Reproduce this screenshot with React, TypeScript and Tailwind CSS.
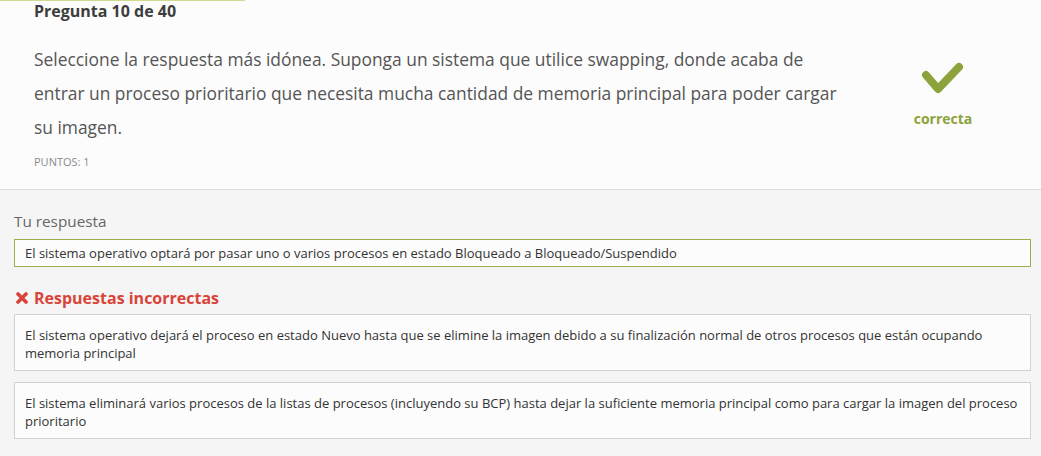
import React from 'react';

const wrong = [
  'El sistema operativo dejará el proceso en estado Nuevo hasta que se elimine la imagen debido a su finalización normal de otros procesos que están ocupando memoria principal',
  'El sistema eliminará varios procesos de la listas de procesos (incluyendo su BCP) hasta dejar la suficiente memoria principal como para cargar la imagen del proceso prioritario',
];

export default function App() {
  return (
    <div className="w-[1041px] h-[456px] overflow-hidden bg-[#f5f5f5] font-['Open_Sans',sans-serif]">
      {/* Question header */}
      <div className="relative bg-[#fcfcfc] border-b border-[#dcdcdc] h-[190px] flex">
        <div className="absolute left-0 top-0 w-[245px] h-px bg-[#cfdc8c]" />
        <div className="flex-1 pl-[34px] pt-0">
          <h2 className="text-[16px] font-bold text-[#3d3d3d] leading-[22px]">Pregunta 10 de 40</h2>
          <p className="mt-[20px] text-[17.4px] leading-[34px] text-[#555] w-[805px]">
            Seleccione la respuesta más idónea. Suponga un sistema que utilice swapping, donde acaba de entrar un proceso prioritario que necesita mucha cantidad de memoria principal para poder cargar su imagen.
          </p>
          <p className="mt-[10px] text-[11px] uppercase text-[#8a8a8a]">Puntos: 1</p>
        </div>
        <div className="w-[200px] flex flex-col items-center pt-[61px] pl-[4px]">
          <svg width="44" height="36" viewBox="0 0 44 36">
            <polyline points="5,14 17,28 38,6" fill="none" stroke="#8ca33b" strokeWidth="8" strokeLinecap="round" strokeLinejoin="round" />
          </svg>
          <span className="mt-[11px] text-[14px] font-bold text-[#8ca33b]">correcta</span>
        </div>
      </div>

      {/* Answers */}
      <div className="pl-[14px] pr-[10px] pt-[20px]">
        <p className="text-[15.3px] text-[#666] leading-[22px]">Tu respuesta</p>
        <div className="mt-[7px] border border-[#9aae4c] bg-[#fcfcfc] px-[10px] py-[4px] text-[13px] leading-[18px] text-[#333]">
          El sistema operativo optará por pasar uno o varios procesos en estado Bloqueado a Bloqueado/Suspendido
        </div>

        <div className="mt-[21px] flex items-center gap-[6px]">
          <svg width="12" height="12" viewBox="0 0 12 12" className="ml-[2px]">
            <path d="M2 2 L10 10 M10 2 L2 10" stroke="#d9443a" strokeWidth="3.6" strokeLinecap="round" />
          </svg>
          <span className="text-[16px] font-bold text-[#d9443a] leading-[20px]">Respuestas incorrectas</span>
        </div>

        <div className="mt-[6px] flex flex-col gap-[11px]">
          {wrong.map((t, i) => (
            <div key={i} className="border border-[#d2d2d2] bg-[#fcfcfc] px-[10px] pt-[11px] pb-[8px] text-[13px] leading-[18px] text-[#333]">
              {t}
            </div>
          ))}
        </div>
      </div>
    </div>
  );
}
